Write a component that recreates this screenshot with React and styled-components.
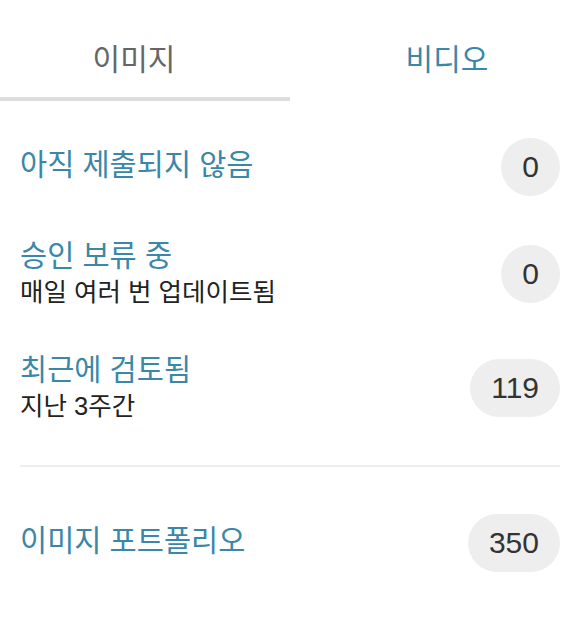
import React from "react";
import styled, { createGlobalStyle } from "styled-components";

const GlobalStyle = createGlobalStyle`
  body {
    margin: 0;
    background: #fff;
    font-family: "Liberation Sans", "Noto Sans CJK KR", sans-serif;
  }
`;

const Panel = styled.div`
  width: 587px;
`;

const Tabs = styled.div`
  display: grid;
  grid-template-columns: 290px 1fr;
  height: 101px;
`;

const Tab = styled.div`
  display: flex;
  align-items: center;
  justify-content: center;
  box-sizing: border-box;
  padding-top: 16px;
  padding-left: ${(props) => (props.active ? "0" : "17px")};
  padding-right: ${(props) => (props.active ? "22px" : "0")};
  font-size: 30px;
  color: ${(props) => (props.active ? "#666" : "#3a87a8")};
  border-bottom: 4px solid ${(props) => (props.active ? "#ddd" : "transparent")};
`;

const List = styled.div`
  padding: 16px 27px 0 20px;
`;

const Row = styled.div`
  display: flex;
  align-items: center;
  justify-content: space-between;
  padding: 21px 0;
`;

const Info = styled.div`
  display: flex;
  flex-direction: column;
`;

const Title = styled.div`
  font-size: 29.5px;
  line-height: 36px;
  color: #3a87a8;
  margin-bottom: ${(props) => (props.solo ? "4px" : "0")};
`;

const Sub = styled.div`
  font-size: 25.5px;
  line-height: 36px;
  color: #222;
`;

const Badge = styled.div`
  box-sizing: border-box;
  height: 58px;
  min-width: 58px;
  padding: 0 21px;
  border-radius: 29px;
  background: #eee;
  color: #333;
  font-size: 30px;
  display: flex;
  align-items: center;
  justify-content: center;
`;

const Divider = styled.div`
  height: 2px;
  background: #eee;
  margin: 20px 0 26px;
`;

const rows = [
  { title: "아직 제출되지 않음", count: 0 },
  { title: "승인 보류 중", sub: "매일 여러 번 업데이트됨", count: 0 },
  { title: "최근에 검토됨", sub: "지난 3주간", count: 119 },
];

export default function App() {
  return (
    <Panel>
      <GlobalStyle />
      <Tabs>
        <Tab active>이미지</Tab>
        <Tab>비디오</Tab>
      </Tabs>
      <List>
        {rows.map((r) => (
          <Row key={r.title}>
            <Info>
              <Title solo={!r.sub}>{r.title}</Title>
              {r.sub && <Sub>{r.sub}</Sub>}
            </Info>
            <Badge>{r.count}</Badge>
          </Row>
        ))}
        <Divider />
        <Row>
          <Info>
            <Title solo>이미지 포트폴리오</Title>
          </Info>
          <Badge>350</Badge>
        </Row>
      </List>
    </Panel>
  );
}
